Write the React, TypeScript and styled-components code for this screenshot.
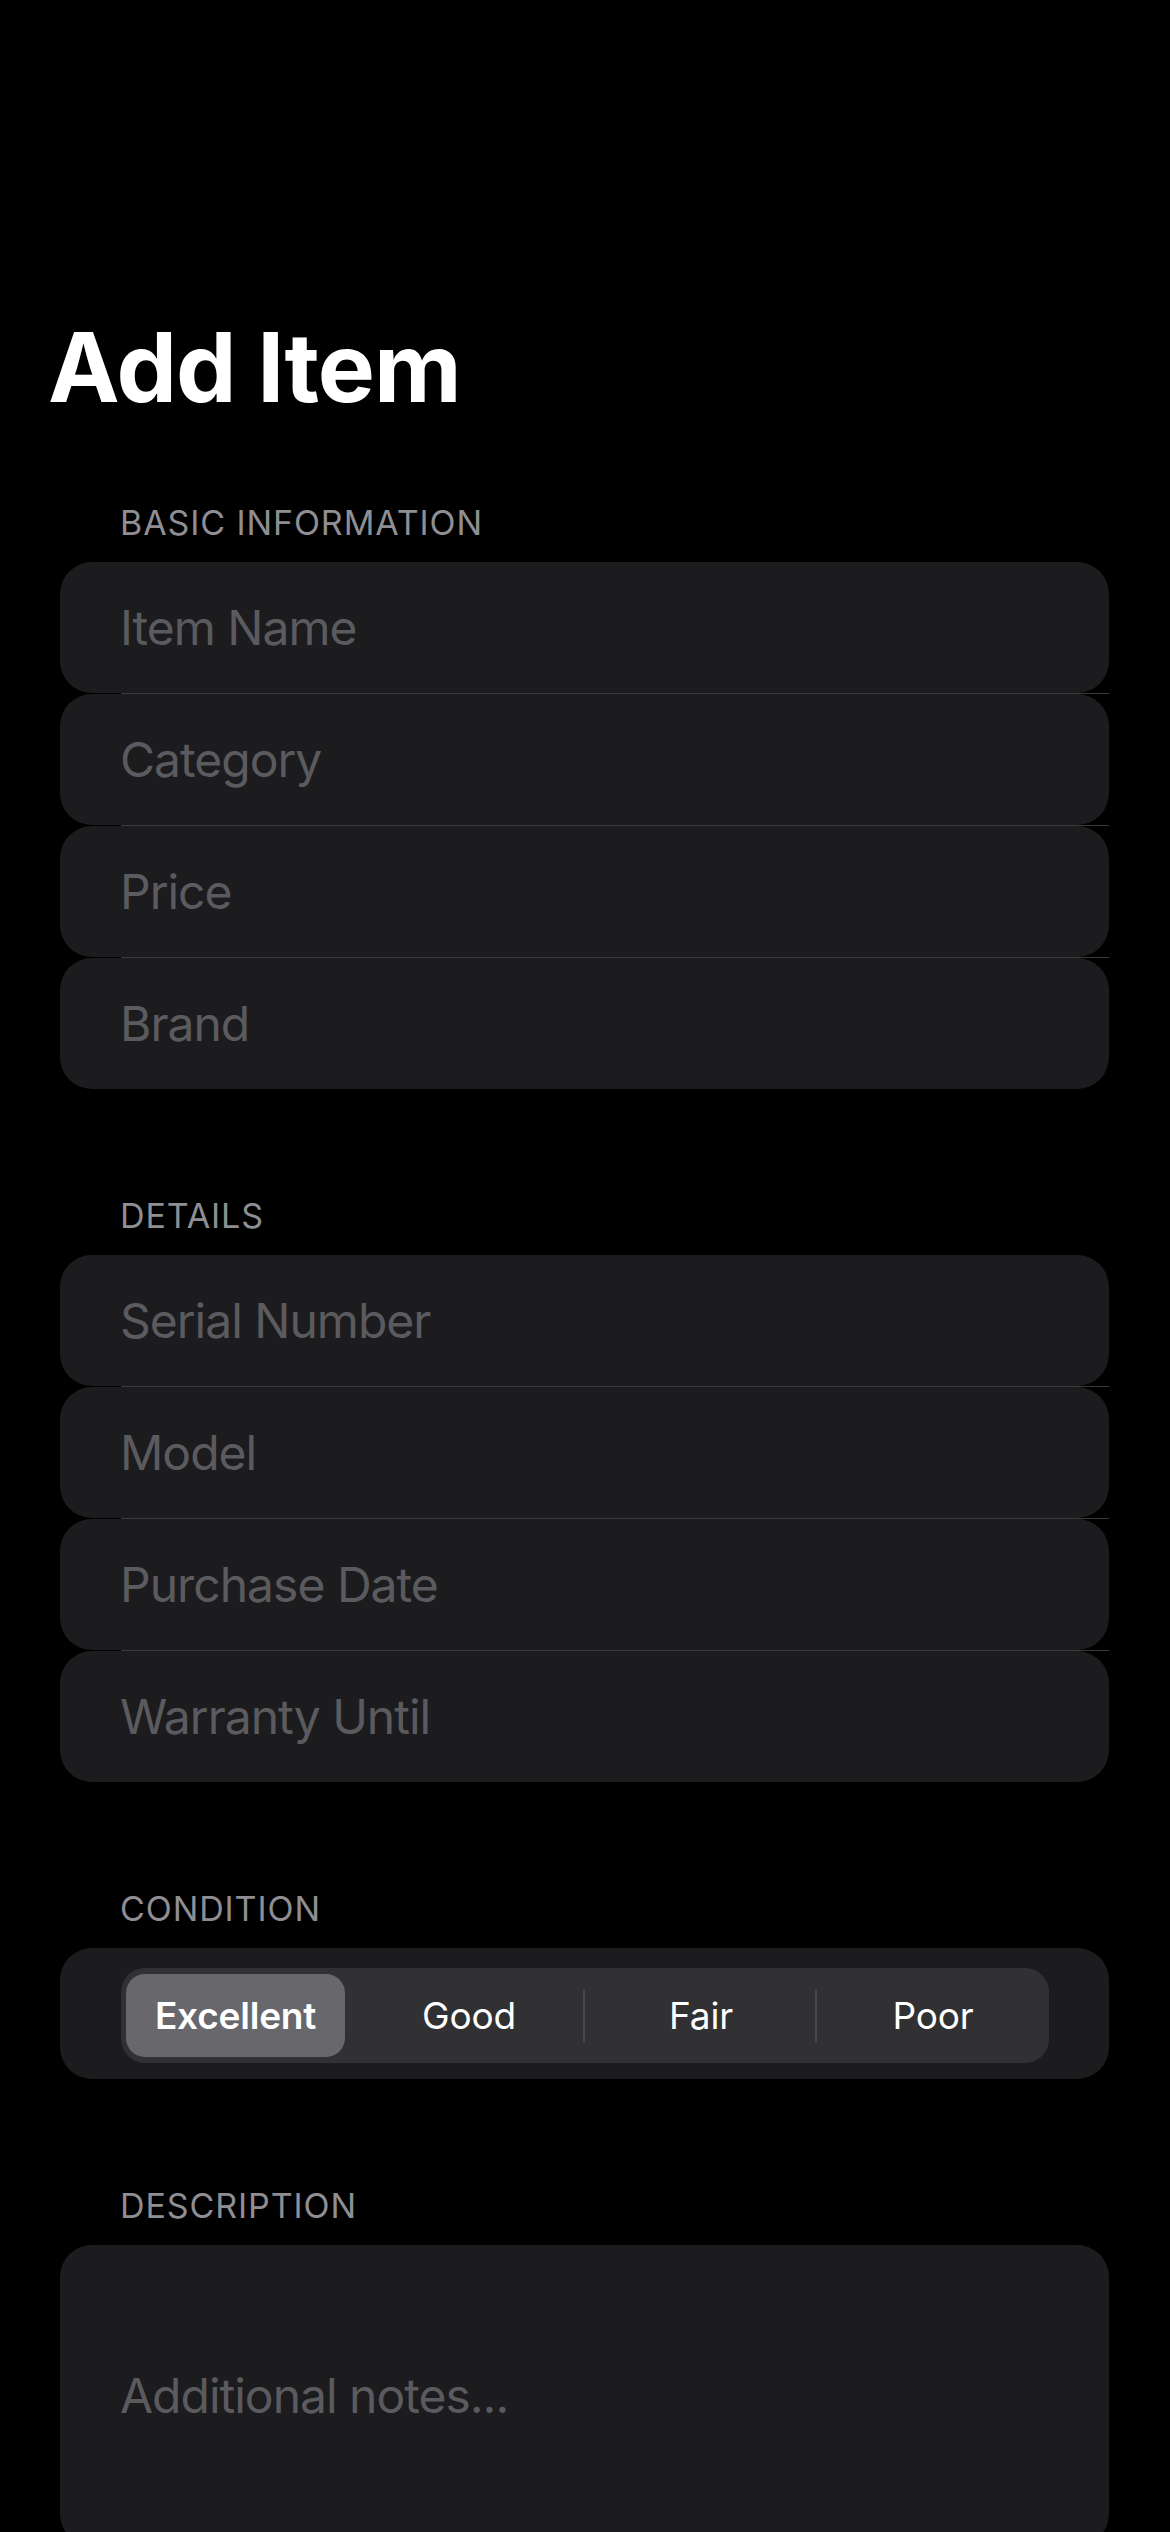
import React from "react";
import styled, { createGlobalStyle } from "styled-components";

const GlobalStyle = createGlobalStyle`
  html, body {
    margin: 0;
    padding: 0;
    background: #000000;
  }
  body {
    font-family: Inter, "Noto Sans", "Liberation Sans", sans-serif;
    -webkit-font-smoothing: antialiased;
  }
`;

const Page = styled.div`
  width: 1170px;
  min-height: 2532px;
  box-sizing: border-box;
  padding-top: 319px;
  background: #000000;
  display: flex;
  flex-direction: column;
`;

const Title = styled.h1`
  margin: 0;
  padding-left: 48px;
  font-size: 96px;
  line-height: 96px;
  font-weight: 700;
  letter-spacing: -1px;
  color: #ffffff;
`;

const Section = styled.section<{ $first?: boolean }>`
  display: flex;
  flex-direction: column;
  margin-top: ${(p) => (p.$first ? "91px" : "110px")};
`;

const SectionLabel = styled.div`
  padding-left: 120px;
  height: 34px;
  font-size: 34px;
  line-height: 34px;
  font-weight: 400;
  letter-spacing: 0.9px;
  color: #8e8e93;
  text-transform: uppercase;
  margin-bottom: 22px;
`;

const Group = styled.div`
  margin: 0 61px 0 60px;
  display: flex;
  flex-direction: column;
`;

const Row = styled.div<{ $height?: number }>`
  height: ${(p) => p.$height ?? 131}px;
  background: #1c1c1e;
  border-radius: 32px;
  display: flex;
  align-items: center;
  padding-left: 60px;
  box-sizing: border-box;
`;

const Placeholder = styled.span`
  font-size: 48px;
  line-height: 48px;
  font-weight: 400;
  letter-spacing: -1px;
  color: #5b5b5f;
`;

const Separator = styled.div`
  height: 1px;
  margin-left: 61px;
  background: #3a3a3d;
`;

const ControlCard = styled.div`
  height: 131px;
  background: #1c1c1e;
  border-radius: 32px;
  box-sizing: border-box;
  padding: 20px 60px 16px 61px;
`;

const Track = styled.div`
  height: 95px;
  background: #313134;
  border-radius: 24px;
  display: grid;
  grid-template-columns: repeat(4, 1fr);
`;

const Segment = styled.div<{ $selected?: boolean }>`
  position: relative;
  display: flex;
  align-items: center;
  justify-content: center;
  margin: ${(p) => (p.$selected ? "6px 8px 6px 5px" : "0")};
  background: ${(p) => (p.$selected ? "#68686c" : "transparent")};
  border-radius: 19px;
  font-size: 37px;
  line-height: 37px;
  font-weight: ${(p) => (p.$selected ? 600 : 400)};
  letter-spacing: -0.2px;
  color: #ffffff;
`;

const Divider = styled.span`
  position: absolute;
  left: -2px;
  top: 21px;
  width: 2px;
  height: 54px;
  border-radius: 1px;
  background: #4a4a4e;
`;

const basic = ["Item Name", "Category", "Price", "Brand"];
const details = ["Serial Number", "Model", "Purchase Date", "Warranty Until"];
const conditions = ["Excellent", "Good", "Fair", "Poor"];

function FieldGroup({ fields }: { fields: string[] }) {
  return (
    <Group>
      {fields.map((f, i) => (
        <React.Fragment key={f}>
          {i > 0 && <Separator />}
          <Row>
            <Placeholder>{f}</Placeholder>
          </Row>
        </React.Fragment>
      ))}
    </Group>
  );
}

export default function App() {
  const selected = 0;
  return (
    <>
      <GlobalStyle />
      <Page>
        <Title>Add Item</Title>

        <Section $first>
          <SectionLabel>Basic Information</SectionLabel>
          <FieldGroup fields={basic} />
        </Section>

        <Section>
          <SectionLabel>Details</SectionLabel>
          <FieldGroup fields={details} />
        </Section>

        <Section>
          <SectionLabel>Condition</SectionLabel>
          <Group>
            <ControlCard>
              <Track>
                {conditions.map((c, i) => (
                  <Segment key={c} $selected={i === selected}>
                    {i > 0 && i !== selected && i - 1 !== selected && <Divider />}
                    {c}
                  </Segment>
                ))}
              </Track>
            </ControlCard>
          </Group>
        </Section>

        <Section>
          <SectionLabel>Description</SectionLabel>
          <Group>
            <Row $height={301}>
              <Placeholder>Additional notes...</Placeholder>
            </Row>
          </Group>
        </Section>
      </Page>
    </>
  );
}
